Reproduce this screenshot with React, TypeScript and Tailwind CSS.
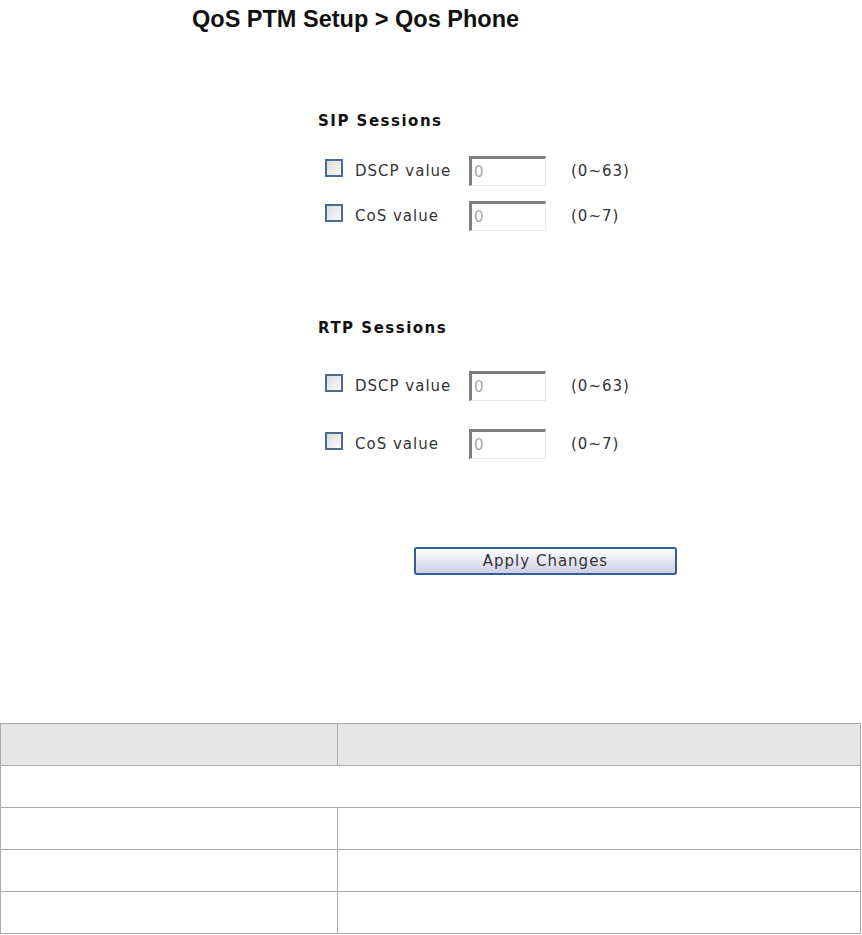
import React from 'react'

const verdana = { fontFamily: '"DejaVu Sans", Verdana, sans-serif' }

function Checkbox() {
  return (
    <span className="inline-block h-[18px] w-[18px] shrink-0 border-2 border-[#4b6a8c] bg-gradient-to-br from-[#dcdcdc] to-[#fafafa]" />
  )
}

function ValueRow({ label, range, className }: { label: string; range: string; className?: string }) {
  return (
    <div className={`flex items-center ${className ?? ''}`}>
      <div className="flex w-[151px] items-center">
        <div className="w-[37px] pl-[7px]">
          <Checkbox />
        </div>
        <span className="text-[15px] tracking-[1px] text-[#333]" style={verdana}>
          {label}
        </span>
      </div>
      <div className="flex h-[30px] w-[77px] items-center border-t-[3px] border-l-[3px] border-r border-b border-t-[#7f7f7f] border-l-[#7f7f7f] border-r-[#ecebdf] border-b-[#ecebdf] bg-white pl-[2px]">
        <span className="text-[15px] text-[#a9a9a9]" style={verdana}>
          0
        </span>
      </div>
      <span className="ml-[25px] text-[15px] tracking-[1px] text-[#333]" style={verdana}>
        {range}
      </span>
    </div>
  )
}

export default function App() {
  return (
    <div className="h-[935px] w-[862px] bg-white">
      <h1
        className="pl-[192px] pt-[5px] text-[23.5px] font-bold leading-[28px] text-[#111]"
        style={{ fontFamily: '"Liberation Sans", Arial, sans-serif' }}
      >
        QoS PTM Setup &gt; Qos Phone
      </h1>

      <div className="ml-[318px]">
        <h2 className="mt-[79px] text-[15px] font-bold leading-[18px] tracking-[1.5px] text-[#111]" style={verdana}>
          SIP Sessions
        </h2>
        <ValueRow className="mt-[26px]" label="DSCP value" range="(0~63)" />
        <ValueRow className="mt-[15px]" label="CoS value" range="(0~7)" />

        <h2 className="mt-[88px] text-[15px] font-bold leading-[18px] tracking-[1.5px] text-[#111]" style={verdana}>
          RTP Sessions
        </h2>
        <ValueRow className="mt-[34px]" label="DSCP value" range="(0~63)" />
        <ValueRow className="mt-[28px]" label="CoS value" range="(0~7)" />

        <button
          className="ml-[96px] mt-[88px] block h-[28px] w-[263px] rounded-[3px] border-2 border-[#2f5d98] bg-gradient-to-b from-white to-[#cfcfe6] text-[15px] tracking-[1px] text-[#333]"
          style={verdana}
        >
          Apply Changes
        </button>
      </div>

      <table className="mt-[148px] w-[861px] border-collapse">
        <tbody>
          <tr className="h-[42px] bg-[#e6e6e6]">
            <td className="w-[337px] border border-[#aaaaaa]" />
            <td className="border border-[#aaaaaa]" />
          </tr>
          <tr className="h-[42px]">
            <td colSpan={2} className="border border-[#aaaaaa]" />
          </tr>
          <tr className="h-[42px]">
            <td className="border border-[#aaaaaa]" />
            <td className="border border-[#aaaaaa]" />
          </tr>
          <tr className="h-[42px]">
            <td className="border border-[#aaaaaa]" />
            <td className="border border-[#aaaaaa]" />
          </tr>
          <tr className="h-[42px]">
            <td className="border border-[#aaaaaa]" />
            <td className="border border-[#aaaaaa]" />
          </tr>
        </tbody>
      </table>
    </div>
  )
}
